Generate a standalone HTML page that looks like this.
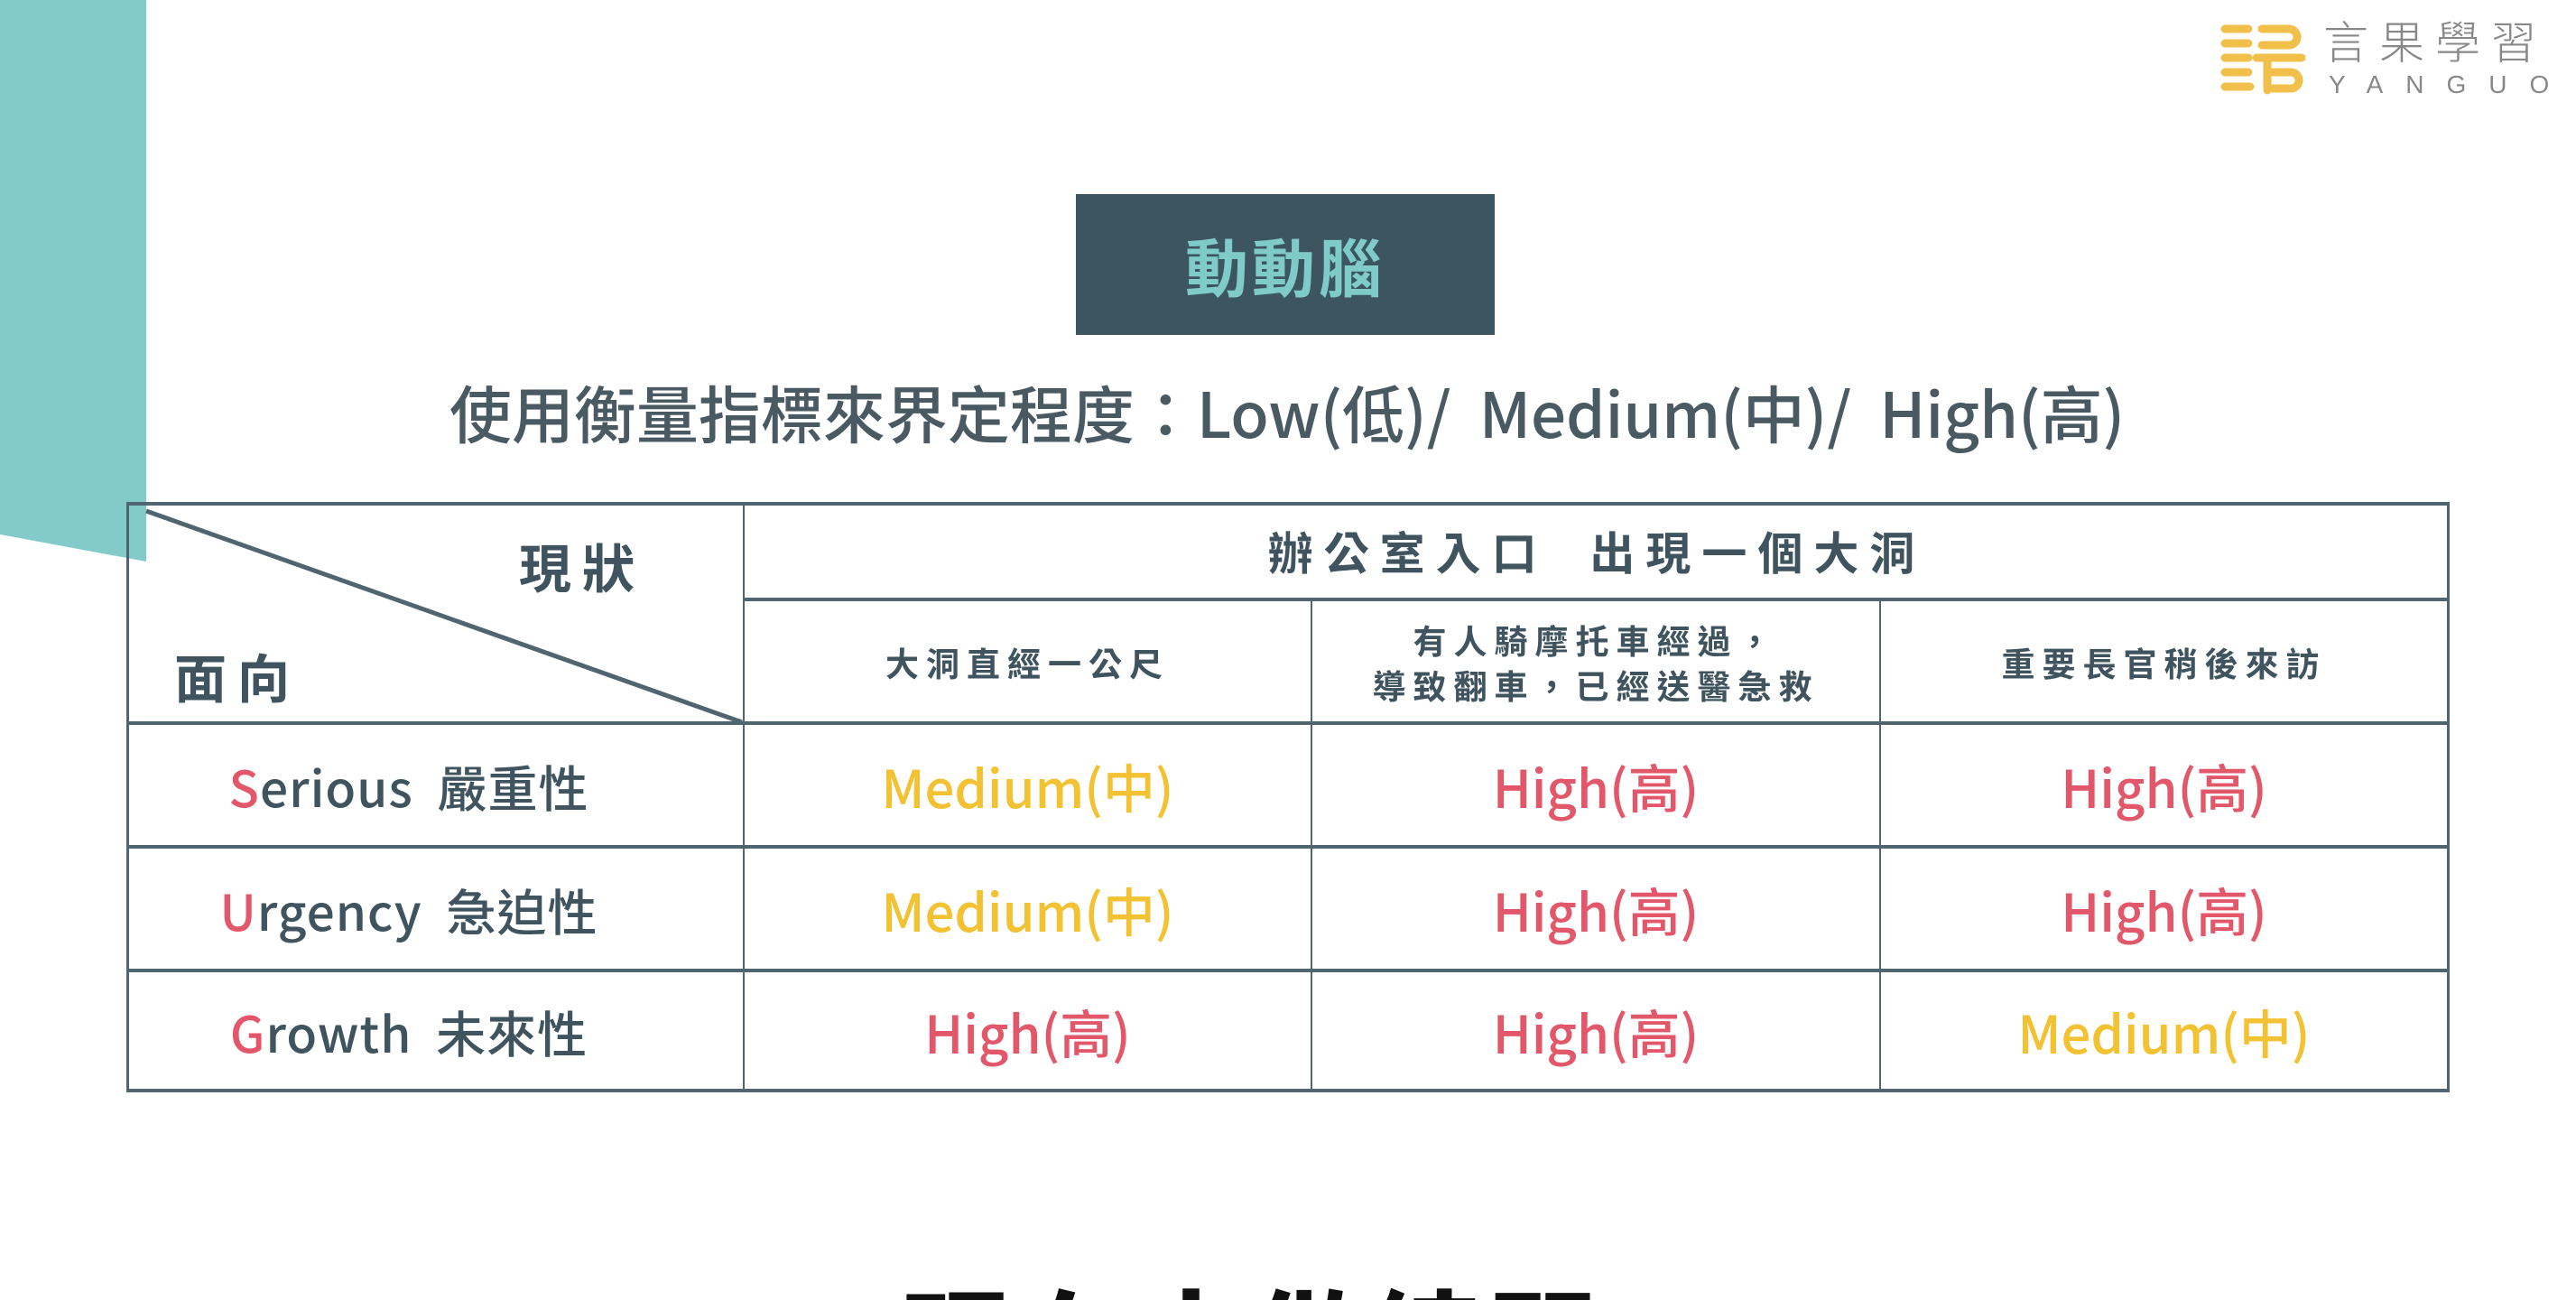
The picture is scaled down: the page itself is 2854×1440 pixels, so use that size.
<!DOCTYPE html>
<html><head><meta charset="utf-8"><style>
html,body{margin:0;padding:0;width:2854px;height:1440px;overflow:hidden;}
body{background:#fff;position:relative;font-family:"Liberation Sans","Noto Sans CJK TC",sans-serif;}
.a{position:absolute;}
.h{position:absolute;background:#4f6670;height:4px;}
.v{position:absolute;background:#4f6670;width:2px;}
.c{position:absolute;display:flex;align-items:center;justify-content:center;text-align:center;}
.val{font-family:"Noto Sans CJK TC",sans-serif;font-size:58px;font-weight:500;}
.m{color:#f2c233;}
.hi{color:#e2576a;}
.lab{font-family:"Noto Sans CJK TC",sans-serif;font-size:55px;color:#3f545e;font-weight:500;letter-spacing:1px;}
.lab b{color:#e2576a;font-weight:500;}
.sub{font-family:"Noto Sans CJK TC",sans-serif;font-size:37px;font-weight:700;color:#3f545e;letter-spacing:8px;line-height:50px;}
</style></head><body>
<svg class="a" style="left:0;top:0" width="170" height="630"><polygon points="0,0 162,0 162,622 0,592" fill="#82cbca"/></svg>

<div class="a" style="left:2460px;top:24px;width:96px;height:82px;">
<svg width="96" height="82" viewBox="0 0 96 82" fill="none" stroke="#f2c04a" stroke-width="9" stroke-linecap="round"><path d="M5 8h26M5 24h26M5 40h26M5 56h26M5 72h28M46 8h30a9 9 0 0 1 0 18H46M40 40h50M52 40v36M58 56h20a9 9 0 0 1 0 18H58"/></svg></div>
<div class="a" style="left:2574px;top:14px;font-family:'Noto Sans CJK TC',sans-serif;font-size:50px;color:#888;letter-spacing:12px;font-weight:300;line-height:60px;">言果學習</div>
<div class="a" style="left:2580px;top:78px;font-size:28px;color:#888;letter-spacing:25px;line-height:32px;">YANGUO</div>

<div class="c" style="left:1192px;top:215px;width:464px;height:156px;background:#3d5560;color:#7ecbc9;font-family:'Noto Sans CJK TC',sans-serif;font-size:70px;font-weight:700;letter-spacing:4px;">動動腦</div>

<div class="c" style="left:400px;top:405px;width:2052px;height:100px;font-family:'Noto Sans CJK TC',sans-serif;font-size:69px;color:#4a5a62;font-weight:500;">使用衡量指標來界定程度：Low(低)/&nbsp; Medium(中)/&nbsp; High(高)</div>

<div class="h" style="left:140px;top:556px;width:2574px;"></div>
<div class="h" style="left:824px;top:662px;width:1890px;"></div>
<div class="h" style="left:140px;top:799px;width:2574px;"></div>
<div class="h" style="left:140px;top:936px;width:2574px;"></div>
<div class="h" style="left:140px;top:1073px;width:2574px;"></div>
<div class="h" style="left:140px;top:1206px;width:2574px;"></div>
<div class="v" style="left:140px;top:556px;height:654px;width:3px;"></div>
<div class="v" style="left:2711px;top:556px;height:654px;width:3px;"></div>
<div class="v" style="left:823px;top:556px;height:654px;"></div>
<div class="v" style="left:1452px;top:662px;height:548px;"></div>
<div class="v" style="left:2082px;top:662px;height:548px;"></div>
<svg class="a" style="left:0;top:0" width="900" height="820"><line x1="162" y1="566" x2="822" y2="800" stroke="#4f6670" stroke-width="5"/></svg>

<div class="a" style="left:575px;top:584px;font-family:'Noto Sans CJK TC',sans-serif;font-size:58px;font-weight:700;color:#3f545e;letter-spacing:12px;">現狀</div>
<div class="a" style="left:193px;top:706px;font-family:'Noto Sans CJK TC',sans-serif;font-size:58px;font-weight:700;color:#3f545e;letter-spacing:12px;">面向</div>

<div class="c sub" style="left:825px;top:558px;width:1888px;height:104px;font-size:50px;letter-spacing:12px;">辦公室入口&nbsp; 出現一個大洞</div>
<div class="c sub" style="left:825px;top:666px;width:627px;height:133px;">大洞直經一公尺</div>
<div class="c sub" style="left:1454px;top:666px;width:628px;height:133px;">有人騎摩托車經過，<br>導致翻車，已經送醫急救</div>
<div class="c sub" style="left:2084px;top:666px;width:627px;height:133px;">重要長官稍後來訪</div>

<div class="c lab" style="left:143px;top:803px;width:620px;height:133px;"><span><b>S</b>erious&nbsp; 嚴重性</span></div>
<div class="c lab" style="left:143px;top:940px;width:620px;height:133px;"><span><b>U</b>rgency&nbsp; 急迫性</span></div>
<div class="c lab" style="left:143px;top:1077px;width:620px;height:129px;"><span><b>G</b>rowth&nbsp; 未來性</span></div>

<div class="c val m" style="left:825px;top:803px;width:627px;height:133px;">Medium(中)</div>
<div class="c val hi" style="left:1454px;top:803px;width:628px;height:133px;">High(高)</div>
<div class="c val hi" style="left:2084px;top:803px;width:627px;height:133px;">High(高)</div>
<div class="c val m" style="left:825px;top:940px;width:627px;height:133px;">Medium(中)</div>
<div class="c val hi" style="left:1454px;top:940px;width:628px;height:133px;">High(高)</div>
<div class="c val hi" style="left:2084px;top:940px;width:627px;height:133px;">High(高)</div>
<div class="c val hi" style="left:825px;top:1077px;width:627px;height:129px;">High(高)</div>
<div class="c val hi" style="left:1454px;top:1077px;width:628px;height:129px;">High(高)</div>
<div class="c val m" style="left:2084px;top:1077px;width:627px;height:129px;">Medium(中)</div>

<div class="a" style="left:0;top:1420px;width:2854px;height:20px;overflow:hidden;">
<div class="a" style="left:1000px;top:-2px;font-family:'Noto Sans CJK TC',sans-serif;font-size:120px;font-weight:900;color:#111;letter-spacing:10px;line-height:1;">現在來做練習</div>
</div>
</body></html>
